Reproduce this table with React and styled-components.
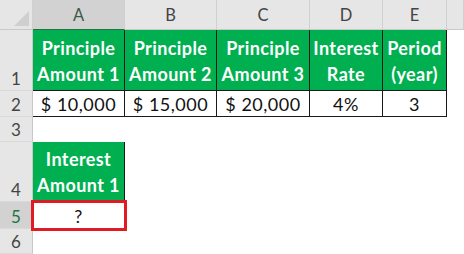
import React from "react";
import styled, { createGlobalStyle } from "styled-components";

const Global = createGlobalStyle`
  html, body { margin: 0; padding: 0; background: #fff; }
  body { font-family: Lato, "Liberation Sans", sans-serif; }
`;

const GREEN = "#00b050";

const Sheet = styled.div`
  display: grid;
  grid-template-columns: 33px 92px 92px 93px 73px 64px 1fr;
  grid-template-rows: 30px 61px 26px 25px 60px 27px 1fr;
  width: 464px;
  height: 254px;
  overflow: hidden;
  background: #fff;
`;

const Corner = styled.div`
  position: relative;
  background: #e6e6e6;
  border-right: 1px solid #d0d0d0;
  border-bottom: 1px solid #c8c8c8;
  box-sizing: border-box;
  &::after {
    content: "";
    position: absolute;
    right: 3px;
    bottom: 3px;
    border-style: solid;
    border-width: 0 0 15px 15px;
    border-color: transparent transparent #cfcfcf transparent;
  }
`;

const ColHead = styled.div`
  box-sizing: border-box;
  background: ${(p) => (p.$active ? "#d2d2d2" : "#e6e6e6")};
  border-right: 1px solid #d0d0d0;
  border-bottom: ${(p) => (p.$active ? `1px solid #217346` : "1px solid #c8c8c8")};
  color: ${(p) => (p.$active ? "#3d5a45" : "#444")};
  font-size: 16.5px;
  display: flex;
  align-items: center;
  justify-content: center;
  padding-top: 1px;
`;

const RowHead = styled.div`
  box-sizing: border-box;
  background: ${(p) => (p.$active ? "#d2d2d2" : "#e6e6e6")};
  border-right: 1px solid #c8c8c8;
  border-bottom: 1px solid #d9d9d9;
  color: ${(p) => (p.$active ? "#217346" : "#444")};
  font-size: 17px;
  display: flex;
  align-items: flex-end;
  justify-content: center;
  padding-bottom: 1px;
`;

const Cell = styled.div`
  position: relative;
  box-sizing: border-box;
  background: ${(p) => p.$bg || "#fff"};
  color: ${(p) => p.$color || "#111"};
  font-weight: ${(p) => (p.$bold ? 700 : 400)};
  font-size: 18px;
  letter-spacing: ${(p) => (p.$bold ? "0.4px" : "0.5px")};
  line-height: ${(p) => (p.$bold ? "26px" : "22px")};
  border-right: 1px solid ${(p) => p.$line || "transparent"};
  border-bottom: 1px solid ${(p) => p.$line || "transparent"};
  display: flex;
  flex-direction: column;
  align-items: center;
  justify-content: flex-end;
  text-align: center;
  padding-bottom: ${(p) => (p.$bold ? "3px" : "1px")};
  white-space: nowrap;
  ${(p) =>
    p.$selected &&
    `
    outline: 3px solid #e01b24;
    outline-offset: -1px;
    z-index: 1;
  `}
`;

const Blank = styled.div`
  background: #fff;
`;

const heads = [
  ["Principle", "Amount 1"],
  ["Principle", "Amount 2"],
  ["Principle", "Amount 3"],
  ["Interest", "Rate"],
  ["Period", "(year)"],
];
const values = ["$ 10,000", "$ 15,000", "$ 20,000", "4%", "3"];
const letters = ["A", "B", "C", "D", "E"];

export default function App() {
  return (
    <>
      <Global />
      <Sheet>
        <Corner />
        {letters.map((l, i) => (
          <ColHead key={l} $active={i === 0}>
            {l}
          </ColHead>
        ))}
        <ColHead />

        <RowHead>1</RowHead>
        {heads.map((h, i) => (
          <Cell key={i} $bg={GREEN} $color="#fff" $bold $line="#1a1a1a">
            <span>{h[0]}</span>
            <span>{h[1]}</span>
          </Cell>
        ))}
        <Blank />

        <RowHead>2</RowHead>
        {values.map((v, i) => (
          <Cell key={i} $line="#1a1a1a">
            {v}
          </Cell>
        ))}
        <Blank />

        <RowHead>3</RowHead>
        <Blank />
        <Blank />
        <Blank />
        <Blank />
        <Blank />
        <Blank />

        <RowHead>4</RowHead>
        <Cell $bg={GREEN} $color="#fff" $bold $line="#1a1a1a">
          <span>Interest</span>
          <span>Amount 1</span>
        </Cell>
        <Blank />
        <Blank />
        <Blank />
        <Blank />
        <Blank />

        <RowHead $active>5</RowHead>
        <Cell $selected>?</Cell>
        <Blank />
        <Blank />
        <Blank />
        <Blank />
        <Blank />

        <RowHead>6</RowHead>
        <Blank />
        <Blank />
        <Blank />
        <Blank />
        <Blank />
        <Blank />
      </Sheet>
    </>
  );
}
